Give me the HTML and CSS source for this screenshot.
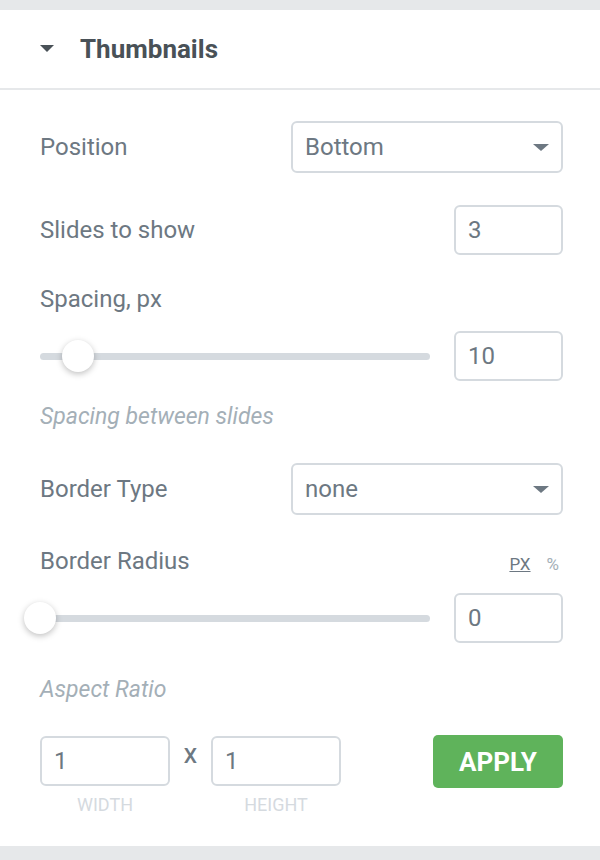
FILE: index.html
```html
<!DOCTYPE html>
<html lang="en">

<head>
    <meta charset="UTF-8">
    <meta name="viewport" content="width=device-width, initial-scale=1.0">
    <title>Thumbnails</title>
    <link rel="stylesheet" href="styles.css">
</head>

<body>
    <div class="panel">
        <div class="panel-head">
            <span class="caret"></span>
            <h2>Thumbnails</h2>
        </div>
        <div class="panel-body">
            <div class="row row-position">
                <label>Position</label>
                <div class="select">Bottom<span class="caret small"></span></div>
            </div>
            <div class="row row-slides">
                <label>Slides to show</label>
                <div class="num">3</div>
            </div>
            <div class="block-label spacing-label">Spacing, px</div>
            <div class="slider-row">
                <div class="track"><span class="thumb" style="left: 38px"></span></div>
                <div class="num">10</div>
            </div>
            <div class="hint">Spacing between slides</div>
            <div class="row row-border">
                <label>Border Type</label>
                <div class="select">none<span class="caret small"></span></div>
            </div>
            <div class="radius-head">
                <label>Border Radius</label>
                <div class="units"><span class="active">PX</span><span>%</span></div>
            </div>
            <div class="slider-row">
                <div class="track"><span class="thumb" style="left: 0px"></span></div>
                <div class="num">0</div>
            </div>
            <div class="hint ratio-label">Aspect Ratio</div>
            <div class="ratio-row">
                <div class="dim">
                    <div class="num wide">1</div>
                    <div class="dim-label">Width</div>
                </div>
                <div class="times">X</div>
                <div class="dim">
                    <div class="num wide">1</div>
                    <div class="dim-label">Height</div>
                </div>
                <button class="apply">APPLY</button>
            </div>
        </div>
    </div>
</body>

</html>
```

FILE: styles.css
```css
:root {
    --gray-bg: #e6e8ea;
    --border: #d5dadf;
    --text: #6d7882;
    --title: #495157;
    --muted: #a4afb7;
}

body {
    margin: 0;
    padding: 10px 0 14px;
    background: var(--gray-bg);
    font-family: Roboto, "Liberation Sans", sans-serif;
    color: var(--text);
}

.panel {
    background: #fff;
}

.panel-head {
    height: 78px;
    border-bottom: 2px solid var(--gray-bg);
    display: flex;
    align-items: center;
    padding-left: 40px;
}

.panel-head h2 {
    margin: 0 0 1px 26px;
    font-size: 26px;
    font-weight: 700;
    color: var(--title);
}

.caret {
    width: 0;
    height: 0;
    border-left: 7px solid transparent;
    border-right: 7px solid transparent;
    border-top: 7px solid var(--title);
    margin-bottom: 2px;
}

.caret.small {
    border-left-width: 8px;
    border-right-width: 8px;
    border-top-width: 7px;
    border-top-color: var(--text);
    margin: 0;
}

.panel-body {
    padding: 31px 37px 0 40px;
    height: 725px;
}

.row {
    display: flex;
    align-items: center;
    justify-content: space-between;
}

label,
.block-label {
    font-size: 24px;
}

.select {
    width: 272px;
    height: 52px;
    box-sizing: border-box;
    border: 2px solid var(--border);
    border-radius: 6px;
    padding: 0 12px;
    display: flex;
    align-items: center;
    justify-content: space-between;
    font-size: 24px;
}

.num {
    width: 109px;
    height: 50px;
    box-sizing: border-box;
    border: 2px solid var(--border);
    border-radius: 6px;
    padding: 0 12px;
    display: flex;
    align-items: center;
    font-size: 24px;
}

.num.wide {
    width: 130px;
}

.row-slides {
    margin-top: 32px;
}

.spacing-label {
    margin-top: 31px;
    line-height: 26px;
}

.slider-row {
    display: flex;
    align-items: center;
    justify-content: space-between;
    margin-top: 19px;
}

.track {
    position: relative;
    width: 390px;
    height: 7px;
    border-radius: 4px;
    background: var(--border);
}

.thumb {
    position: absolute;
    top: 50%;
    width: 32px;
    height: 32px;
    margin: -16px 0 0 -16px;
    border-radius: 50%;
    background: #fff;
    box-shadow: 0 2px 6px rgba(0, 0, 0, 0.25);
}

.hint {
    font-size: 23px;
    font-style: italic;
    color: var(--muted);
    line-height: 26px;
    margin-top: 23px;
}

.row-border {
    margin-top: 33px;
}

.radius-head {
    display: flex;
    align-items: center;
    justify-content: space-between;
    height: 26px;
    margin-top: 33px;
    line-height: 26px;
}

.units {
    display: flex;
    gap: 16px;
    font-size: 17px;
    margin-top: 6px;
    padding-right: 4px;
}

.units span {
    color: var(--muted);
}

.units .active {
    color: var(--text);
    text-decoration: underline;
}

.ratio-label {
    margin-top: 34px;
}

.ratio-row {
    display: flex;
    align-items: flex-start;
    margin-top: 33px;
}

.dim {
    display: flex;
    flex-direction: column;
    align-items: center;
}

.dim-label {
    margin-top: 8px;
    font-size: 18px;
    text-transform: uppercase;
    color: var(--border);
}

.times {
    width: 41px;
    text-align: center;
    font-size: 21px;
    font-weight: 500;
    line-height: 50px;
    margin-top: -5px;
}

.apply {
    margin-left: auto;
    margin-top: -1px;
    width: 130px;
    height: 53px;
    border: none;
    border-radius: 5px;
    background: #5fb35b;
    color: #fff;
    font-family: Roboto, "Liberation Sans", sans-serif;
    font-size: 26px;
    font-weight: 700;
}
```
